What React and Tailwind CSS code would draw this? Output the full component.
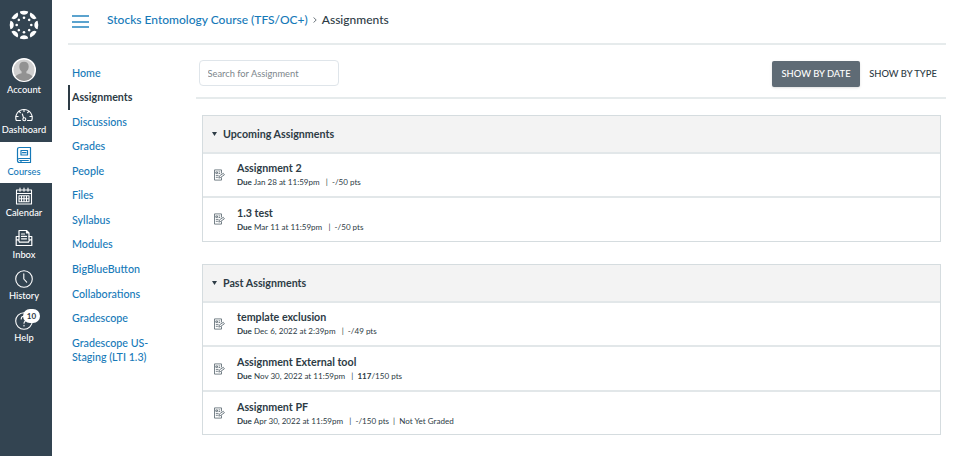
import React from "react";

const iconProps = {
  fill: "none",
  stroke: "currentColor",
  strokeWidth: 1.2,
  strokeLinecap: "round",
  strokeLinejoin: "round",
};

const CanvasLogo = () => (
  <svg className="w-[30px] h-[30px]" viewBox="-15 -15 30 30" fill="#fff">
    {[0, 45, 90, 135, 180, 225, 270, 315].map((angle) => (
      <g key={angle} transform={`rotate(${angle})`}>
        <path d="M-4.2 -13.6 Q0 -15 4.2 -13.6 C3.8 -9.2 -3.8 -9.2 -4.2 -13.6Z" />
        <circle cx="0" cy="-7.3" r="1.3" />
      </g>
    ))}
  </svg>
);

const AccountIcon = () => (
  <svg className="w-[26px] h-[26px]" viewBox="0 0 26 26">
    <circle cx="13" cy="13" r="11.3" fill="#cfcfcf" stroke="#fff" strokeWidth="1.5" />
    <path
      d="M13 4.8c-3.1 0-4.7 2-4.7 4.8 0 2.3.9 4 2.3 5v1.6c-2.8.8-5 1.5-6.2 3.4a10.7 10.7 0 0 0 17.2 0c-1.2-1.9-3.4-2.6-6.2-3.4v-1.6c1.4-1 2.3-2.7 2.3-5 0-2.8-1.6-4.8-4.7-4.8z"
      fill="#929292"
    />
  </svg>
);

const DashboardIcon = () => (
  <svg className="w-5 h-[18px] mt-1" viewBox="0 0 20 18" {...iconProps} strokeWidth="1.1">
    <path d="M6.5 14.500H2.300A8.200 8.200 0 1 1 17.700 14.500H13.500" />
    <path d="M10 3.600v1.800M5.200 5.500l1.200 1.200M14.800 5.500l-1.200 1.200M2.200 10.500h1.900M15.900 10.500h1.900" />
    <path d="M8.300 8l1.200 3.700" />
    <circle cx="10.300" cy="13.200" r="1.500" />
  </svg>
);

const CoursesIcon = () => (
  <svg className="w-[18px] h-[18px]" viewBox="0 0 18 18" {...iconProps}>
    <path d="M15.5 12.500V1.500H4.500Q2.500 1.500 2.500 3.500V14.500Q2.500 16.500 4.500 16.500H15.500V12.500H4.500Q2.500 12.500 2.500 14.500" />
    <path d="M6 4.500h6.500v4.500H6zM7.500 6.700h3.500M6 14.500v1.500M4.800 14.500h8.500" />
  </svg>
);

const CalendarIcon = () => (
  <svg className="w-[18px] h-[18px]" viewBox="0 0 18 18" {...iconProps} strokeWidth="1.1">
    <path d="M1.500 3h15v14h-15zM1.500 6.500h15M5 1v3.200M9 1v3.200M13 1v3.200" />
    <path d="M4 8.700h10v6H4zM4 11.700h10M6.500 8.700v6M9 8.700v6M11.500 8.700v6" />
  </svg>
);

const InboxIcon = () => (
  <svg className="w-[18px] h-[18px]" viewBox="0 0 18 18" {...iconProps}>
    <path d="M4 10.500V1.500h7.500L14 4v6.500M11.500 1.500V4H14" />
    <path d="M4 7.500H1.200v9h15.600v-9H14M1.200 10.800H3.500l1 2.400h9l1-2.400h2.300" />
    <path d="M6.500 5h3M6.500 7.400h5M6.500 9.800h5" />
  </svg>
);

const HistoryIcon = () => (
  <svg className="w-5 h-5" viewBox="0 0 20 20" {...iconProps} strokeWidth="1.1">
    <circle cx="10" cy="10" r="8.300" />
    <path d="M9.800 4.800V10l2.900 3.200" />
  </svg>
);

const HelpIcon = () => (
  <svg className="w-5 h-5" viewBox="0 0 20 20" {...iconProps} strokeWidth="1.1">
    <circle cx="10" cy="10" r="8.300" />
    <path d="M7.200 8c0-3.700 5.600-3.600 5.600-.3 0 2.100-2.800 2.300-2.800 4.500M10 14.300v.7" />
  </svg>
);

const AssignmentIcon = () => (
  <svg
    className="w-3 h-3 shrink-0 text-[#56636c]"
    viewBox="0 0 12 12"
    {...iconProps}
    strokeWidth="0.8"
  >
    <path d="M8.500 4V.9H1.500v10.200h7V8.800" />
    <path d="M3.200 2.900h1.300v1.500H3.200zM6 2.900h.8M6 4.500h.8M3.200 6.400h2M3.200 8.300h1.300" />
    <path d="M5.900 8.700l.4-1.700 4-2.700 1.100 1.500-3.900 2.700z" />
  </svg>
);

const globalLinks = [
  { label: "Dashboard", Icon: DashboardIcon },
  { label: "Courses", Icon: CoursesIcon, active: true },
  { label: "Calendar", Icon: CalendarIcon },
  { label: "Inbox", Icon: InboxIcon },
  { label: "History", Icon: HistoryIcon },
  { label: "Help", Icon: HelpIcon, badge: 10 },
];

const courseLinks = [
  "Home",
  "Assignments",
  "Discussions",
  "Grades",
  "People",
  "Files",
  "Syllabus",
  "Modules",
  "BigBlueButton",
  "Collaborations",
  "Gradescope",
  "Gradescope US-Staging (LTI 1.3)",
];

const groups = [
  {
    title: "Upcoming Assignments",
    items: [
      { name: "Assignment 2", due: "Jan 28 at 11:59pm", score: "-", points: 50 },
      { name: "1.3 test", due: "Mar 11 at 11:59pm", score: "-", points: 50 },
    ],
  },
  {
    title: "Past Assignments",
    items: [
      { name: "template exclusion", due: "Dec 6, 2022 at 2:39pm", score: "-", points: 49 },
      { name: "Assignment External tool", due: "Nov 30, 2022 at 11:59pm", score: "117", points: 150 },
      { name: "Assignment PF", due: "Apr 30, 2022 at 11:59pm", score: "-", points: 150, note: "Not Yet Graded" },
    ],
  },
];

const GlobalNav = () => (
  <nav className="w-[52px] shrink-0 bg-[#334451] text-white text-[9.3px] leading-3 font-medium">
    <div className="h-[50px] flex items-center justify-center pr-1">
      <CanvasLogo />
    </div>
    <a className="h-[50px] pt-[7px] pr-1 flex flex-col items-center gap-[1px]">
      <AccountIcon />
      <span>Account</span>
    </a>
    {globalLinks.map(({ label, Icon, active, badge }) => (
      <a
        key={label}
        className={`h-[41.500px] pr-1 flex flex-col items-center justify-end pb-[5.500px] ${
          active ? "bg-white text-[#1579b8]" : ""
        }`}
      >
        <div className="relative h-5 mb-[1px] flex items-center justify-center">
          <Icon />
          {badge && (
            <span className="absolute -top-[2px] left-[9px] w-[17px] h-[14px] rounded-full bg-white text-[#2d3b45] text-[8px] leading-[14px] font-bold text-center">
              {badge}
            </span>
          )}
        </div>
        <span>{label}</span>
      </a>
    ))}
  </nav>
);

const CourseNav = () => (
  <nav className="w-32 shrink-0 pt-[15.500px] text-[10.7px] leading-[14px] font-medium">
    {courseLinks.map((label) => (
      <a
        key={label}
        className={`block w-[90px] py-[5.270px] border-l-2 pl-[2px] ${
          label === "Assignments"
            ? "border-[#2d3b45] text-[#2d3b45] font-bold"
            : "border-transparent text-[#1579b8]"
        }`}
      >
        {label}
      </a>
    ))}
  </nav>
);

const AssignmentRow = ({ item }) => (
  <li className="h-[44.600px] flex items-center gap-3 pl-2.5 border-t-2 border-[#e2e7e9]">
    <AssignmentIcon />
    <div className="pt-[1px]">
      <div className="text-[10.7px] leading-[14px] font-bold">{item.name}</div>
      <div className="text-[8.05px] leading-[14px] whitespace-pre">
        <b>Due</b> {item.due}
        {"   |  "}
        {item.score === "-" ? "-" : <b>{item.score}</b>}/{item.points} pts
        {item.note && `  |  ${item.note}`}
      </div>
    </div>
  </li>
);

const AssignmentGroup = ({ group }) => (
  <section className="border border-[#d5dcdf]">
    <h2 className="h-[35.500px] flex items-center bg-[#f3f3f3] pl-[9px] text-[10.7px] font-bold">
      <svg className="w-[5px] h-1 mr-1.5" viewBox="0 0 5 4" fill="currentColor">
        <path d="M0 0h5L2.500 4z" />
      </svg>
      {group.title}
    </h2>
    <ul>
      {group.items.map((item) => (
        <AssignmentRow key={item.name} item={item} />
      ))}
    </ul>
  </section>
);

const App = () => {
  return (
    <div className="w-[960px] h-[456px] flex overflow-hidden bg-white text-[#2d3b45] font-['Lato',sans-serif]">
      <GlobalNav />
      <div className="flex-1 pl-4 pr-3.5">
        <header className="h-[45px] pb-[3px] flex items-center border-b-2 border-[#e6ebec] text-[12px] font-medium">
          <div className="w-[17px] ml-1 mr-[18px] pt-[3px] flex flex-col gap-[3.500px]">
            <span className="h-[2px] bg-[#5ba3ce]" />
            <span className="h-[2px] bg-[#5ba3ce]" />
            <span className="h-[2px] bg-[#5ba3ce]" />
          </div>
          <a className="text-[#1579b8]">Stocks Entomology Course (TFS/OC+)</a>
          <svg className="w-1 h-1.5 mx-[5px]" viewBox="0 0 4 6" {...iconProps} strokeWidth="0.700">
            <path d="M.8.700L3.200 3 .8 5.300" />
          </svg>
          <span>Assignments</span>
        </header>
        <div className="flex">
          <CourseNav />
          <main className="flex-1">
            <div className="h-[54px] pt-[15px] pl-[2.500px] flex items-start border-b-2 border-[#e6ebec]">
              <input
                className="w-[140px] h-[26px] px-2 border border-[#dfe5ea] rounded-sm text-[9.300px] placeholder:text-[#7d868c]"
                placeholder="Search for Assignment"
              />
              <button className="ml-auto mt-[1px] w-[88px] h-[26px] rounded-[2px] bg-[#5f6b75] text-white text-[9.400px] font-medium shadow-sm">
                SHOW BY DATE
              </button>
              <button className="mt-[1px] w-[86px] h-[26px] text-[9.400px] font-medium">
                SHOW BY TYPE
              </button>
            </div>
            <div className="pt-4 pl-1.5 pr-[5px] flex flex-col gap-[22.500px]">
              {groups.map((group) => (
                <AssignmentGroup key={group.title} group={group} />
              ))}
            </div>
          </main>
        </div>
      </div>
    </div>
  );
};

export default App;
